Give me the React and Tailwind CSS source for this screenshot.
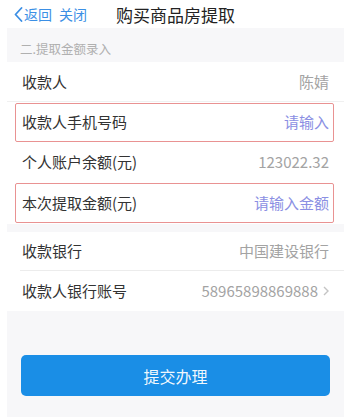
export default function App() {
  const font = { fontFamily: '"Noto Sans CJK SC", "Noto Sans", sans-serif' };
  return (
    <div className="w-[351px] h-[417px] overflow-hidden bg-white" style={font}>
      {/* 顶部导航 */}
      <div className="grid h-[28px] grid-cols-[1fr_auto_1fr] items-center">
        <div className="flex items-center pl-[14px] text-[14px] text-[#3b8fe5]">
          <svg width="9" height="15" viewBox="0 0 9 15" className="mr-[1px]">
            <path d="M7.5 1 L1.5 7.5 L7.5 14" fill="none" stroke="#3b8fe5" strokeWidth="1.8" strokeLinecap="round" strokeLinejoin="round" />
          </svg>
          <span>返回</span>
          <span className="ml-[7px]">关闭</span>
        </div>
        <div className="text-[17px] leading-none text-[#222]">购买商品房提取</div>
        <div />
      </div>

      <div className="mx-[7px] h-[389px] bg-[#f7f7f9]">
        <div className="flex h-[34px] items-center pl-[13px] pt-[8px] text-[12.5px] text-[#b0b0b0]">二.提取金额录入</div>

        <div className="bg-white">
          <div className="flex h-[40px] items-center justify-between border-b border-[#f0f0f0] px-[15px] pt-[2px] text-[15px]">
            <span className="text-[#333]">收款人</span>
            <span className="text-[#a3a3a3]">陈婧</span>
          </div>
          <div className="h-[40px] pl-[8px] pr-[10px] pt-[1px]">
            <div className="flex h-[39px] items-center justify-between rounded-[2px] border-[1.5px] border-[#e99292] pl-[6px] pr-[4px] text-[15px]">
              <span className="text-[#333]">收款人手机号码</span>
              <span className="text-[#8b8fe3]">请输入</span>
            </div>
          </div>
          <div className="flex h-[41px] items-center justify-between px-[15px] text-[15px]">
            <span className="text-[#333]">个人账户余额(元)</span>
            <span className="text-[#a3a3a3]">123022.32</span>
          </div>
          <div className="h-[41px] pl-[8px] pr-[10px]">
            <div className="flex h-[40px] items-center justify-between rounded-[2px] border-[1.5px] border-[#e99292] pl-[6px] pr-[4px] text-[15px]">
              <span className="text-[#333]">本次提取金额(元)</span>
              <span className="text-[#8b8fe3]">请输入金额</span>
            </div>
          </div>
        </div>

        <div className="mt-[8px] bg-white">
          <div className="flex h-[38px] items-center justify-between px-[15px] text-[15px]">
            <span className="text-[#333]">收款银行</span>
            <span className="text-[#a3a3a3]">中国建设银行</span>
          </div>
          <div className="ml-[13px] border-t border-[#ececec]" />
          <div className="flex h-[40px] items-center justify-between pl-[15px] pr-[14px] text-[15px]">
            <span className="text-[#333]">收款人银行账号</span>
            <span className="flex items-center text-[#a3a3a3]">
              58965898869888
              <svg width="8" height="12" viewBox="0 0 8 12" className="ml-[4px]">
                <path d="M2 2 L6 6 L2 10" fill="none" stroke="#c4c4c4" strokeWidth="1.4" />
              </svg>
            </span>
          </div>
        </div>

        <div className="px-[14px] pt-[44px]">
          <button className="flex h-[41px] w-full items-center justify-center rounded-[5px] bg-[#1a8ee6] text-[16px] text-white/95">
            提交办理
          </button>
        </div>
      </div>
    </div>
  );
}
